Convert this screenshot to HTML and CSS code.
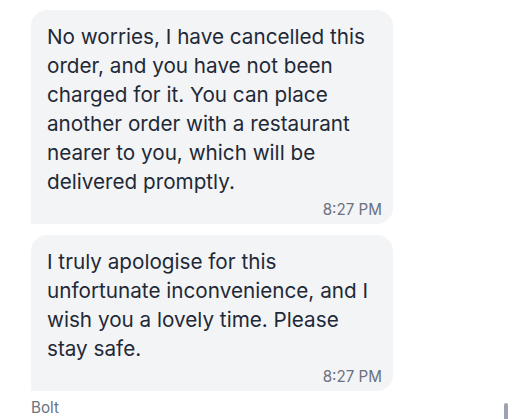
FILE: index.html
```html
<!DOCTYPE html>
<html lang="en">
<head>
<meta charset="utf-8">
<link rel="stylesheet" href="styles.css">
</head>
<body>
<div class="chat">
  <div class="bubble">
    <p class="text">No worries, I have cancelled this order, and you have not been charged for it. You can place another order with a restaurant nearer to you, which will be delivered promptly.</p>
    <div class="time">8:27 PM</div>
  </div>
  <div class="bubble">
    <p class="text">I truly apologise for this unfortunate inconvenience, and I wish you a lovely time. Please stay safe.</p>
    <div class="time">8:27 PM</div>
  </div>
  <div class="sender">Bolt</div>
</div>
<div class="scrollbar"></div>
</body>
</html>
```
FILE: styles.css
```css
html, body {
  margin: 0;
  padding: 0;
  background: #ffffff;
  overflow: hidden;
}
body {
  width: 512px;
  height: 419px;
  font-family: Inter, "Noto Sans", sans-serif;
  position: relative;
}
.chat {
  display: flex;
  flex-direction: column;
  align-items: flex-start;
  gap: 11px;
  padding: 10px 0 0 31px;
}
.bubble {
  width: 362px;
  box-sizing: border-box;
  background: #f3f4f6;
  border-radius: 16px 16px 16px 0;
  padding: 12px 11px 4px 16px;
  display: flex;
  flex-direction: column;
}
.text {
  margin: 0;
  padding-right: 5px;
  font-size: 20.7px;
  line-height: 29px;
  color: #1f2937;
}
.time {
  align-self: flex-end;
  font-size: 15.2px;
  line-height: 20px;
  color: #6b7280;
  margin-top: 4px;
}
.sender {
  font-size: 15.2px;
  line-height: 20px;
  color: #6b7280;
  margin-top: -4px;
}
.scrollbar {
  position: absolute;
  right: 4px;
  top: 403px;
  width: 4px;
  height: 30px;
  background: #9ca3af;
  border-radius: 2px;
}
```
